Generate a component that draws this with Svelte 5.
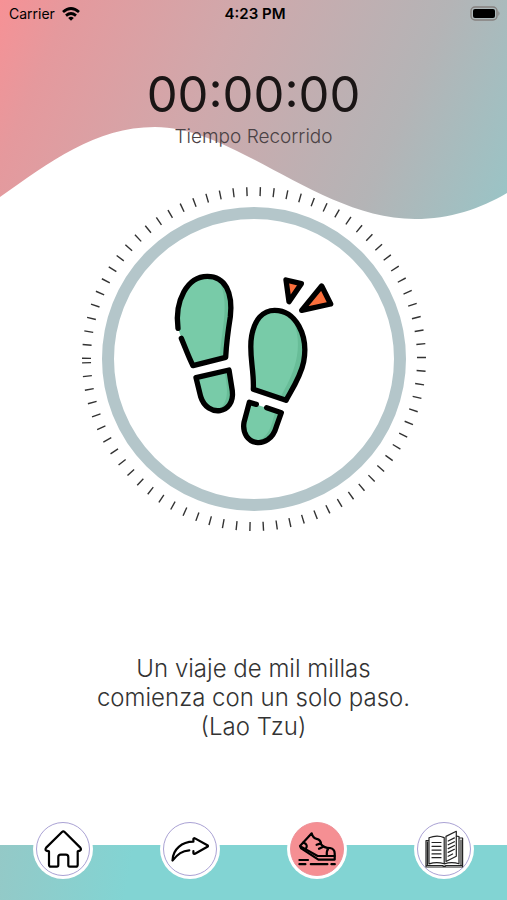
<script>
  const elapsed = '00:00:00';
  const quote = ['Un viaje de mil millas', 'comienza con un solo paso.', '(Lao Tzu)'];
  const tabs = [
    { id: 'home', label: 'Inicio' },
    { id: 'share', label: 'Compartir' },
    { id: 'walk', label: 'Caminar' },
    { id: 'book', label: 'Lectura' }
  ];
  let active = $state('walk');
</script>

<div class="screen">
  <svg class="wave" viewBox="0 0 507 220" preserveAspectRatio="none" aria-hidden="true">
    <defs>
      <linearGradient id="sky" gradientUnits="userSpaceOnUse" x1="-10" y1="20" x2="500" y2="240">
        <stop offset="0" stop-color="#f79195" />
        <stop offset="0.12" stop-color="#e5999d" />
        <stop offset="0.4" stop-color="#d0a8ab" />
        <stop offset="0.75" stop-color="#b4b4b6" />
        <stop offset="1" stop-color="#98c5c7" />
      </linearGradient>
    </defs>
    <path fill="url(#sky)" d="M0 0V197C50 162 95 127 155 127C235 127 320 219 415 219C450 219 480 209 507 193V0Z" />
  </svg>

  <header class="status">
    <span class="carrier">
      Carrier
      <svg width="18" height="14" viewBox="0 0 18 14" aria-hidden="true">
        <g fill="none" stroke="#000" stroke-width="2.8">
          <path d="M1 5Q9-1.9 17 5" />
          <path d="M4 8.6Q9 4.4 14 8.6" />
        </g>
        <path d="M6.2 10.9Q9 8.6 11.8 10.9L9 13.8Z" />
      </svg>
    </span>
    <span class="clock">4:23 PM</span>
    <svg class="battery" width="31" height="15" viewBox="0 0 31 15" aria-hidden="true">
      <rect x="1" y="1" width="26" height="13" rx="4" fill="none" stroke="#85807f" stroke-width="1.4" />
      <rect x="3" y="3" width="22" height="9" rx="2" />
      <path d="M28.4 5Q30.6 7.5 28.4 10Z" fill="#85807f" />
    </svg>
  </header>

  <main>
    <section class="timer">
      <time>{elapsed}</time>
      <p>Tiempo Recorrido</p>
    </section>

    <svg class="dial" viewBox="0 0 344 344" role="img" aria-label="Pasos">
      <path
        class="ticks"
        d="M4.5 172A167.5 167.5 0 0 1 339.5 172A167.5 167.5 0 0 1 4.5 172"
      />
      <circle cx="172" cy="172" r="146" fill="#fff" stroke="#b4c6ca" stroke-width="12" />
      <g transform="translate(78 73) scale(.33333)">
        <g fill="#78cba8">
          <path d="M55 207C44 122 82 48 142 48C194 48 218 98 211 170C203 220 199 255 197 292L99 317L64 235Z" />
          <path d="M108 353L207 330L217 393C225 459 142 470 125 410Z" />
          <path d="M280 388C283 330 265 280 275 227C284 180 308 151 344 151C405 151 446 226 431 305C423 347 398 385 378 421Z" />
          <path d="M268 427L364 458L349 500C326 570 241 551 252 487Z" />
        </g>
        <g fill="#68bd98">
          <path d="M179 67C207 94 214 123 211 170L197 292L179 295C184 210 210 131 179 67Z" />
          <path d="M194 333L207 330L217 393C220 422 204 440 181 445C211 417 200 376 194 333Z" />
          <path d="M401 184C429 216 440 256 431 305C423 347 398 385 378 421L359 415C386 368 438 282 401 184Z" />
          <path d="M347 453L364 458L349 500C340 530 319 541 300 541C335 517 334 489 347 453Z" />
        </g>
        <g fill="#fb6f3c">
          <path d="M378 60L424 71L387 125Z" />
          <path d="M485 78L512 134L425 151Z" />
        </g>
        <g fill="none" stroke="#000" stroke-width="16" stroke-linecap="round" stroke-linejoin="round">
          <path d="M54 205C43 122 82 49 142 49C196 49 219 98 211 170C203 220 199 255 197 292L99 317C85 290 76 263 64 235" />
          <path d="M108 353L207 330L217 393C225 463 142 474 122 410Z" />
          <path d="M280 388C283 330 265 280 275 227C284 180 308 151 344 151C407 151 446 226 431 305C423 347 398 385 378 421Z" />
          <path d="M289 433L268 427L252 487C241 556 328 574 349 500L364 458L320 443" />
          <path d="M378 60L424 71L387 125Z" />
          <path d="M485 78L512 132L425 151Z" />
        </g>
      </g>
    </svg>

    <section class="quote">
      <p>{#each quote as line}<span>{line}</span>{/each}</p>
    </section>
  </main>

  <nav>
    {#each tabs as tab}
      <button
        class:active={active === tab.id}
        aria-label={tab.label}
        aria-pressed={active === tab.id}
        onclick={() => (active = tab.id)}
      >
        <svg viewBox="0 0 60 60" aria-hidden="true">
          <circle class="disc" cx="30" cy="30" r="26.5" />
          {#if tab.id === 'home'}
            <path
              class="line"
              d="M29 13Q30.3 11.8 31.6 13L47.3 28.6Q48.7 30.6 47 31.6L44.7 32.4V45.7Q44.7 47.7 42.7 47.7H36.8Q35.3 47.7 35.3 46V38.2Q35.3 35.7 32.8 35.7H27.8Q25.3 35.7 25.3 38.2V46Q25.3 47.7 23.8 47.7H18Q16 47.7 16 45.7V32.4L13.3 31.6Q11.8 30.6 13.2 28.6Z"
            />
          {:else if tab.id === 'share'}
            <path
              class="line"
              d="M29.3 31.3C22 31.8 18 35 12.5 41.5C12.8 30 22 22.8 33.4 22.7V19.8Q33.8 18.8 35 19.4L47.4 26.2Q48.6 27 47.4 27.8L35 34.8Q33.6 35.2 33.4 34V32"
            />
          {:else if tab.id === 'walk'}
            <g class="line">
              <path d="M13 27L24.7 14.3C25.5 17.3 26.8 19.4 29.6 19.9C33 20.6 34 22.2 34 25.2C36.8 28.6 39.4 29 43 29Q47.7 29.8 47.7 34.5V40.6H31.4L14.2 29.4Z" />
              <path d="M14 27.6L30.6 37H47.6M16.2 23.6C20.2 24.7 20.5 27.4 18.8 30M41.4 29.2C39.5 31.5 39.6 34.5 39.8 36.8M34 24.4L29.6 25.8M36.2 27.7L32 29.8" />
              <path d="M12.4 41H21M12.4 45.2H18.4M23.8 45.2H40.4M44.4 45.2H47.8" />
            </g>
          {:else}
            <g class="fine">
              <path d="M15 21.7H12V48H48.6V19H45M13.5 23V46.4M47 21V46.4M15 44.8V18.8Q23 15.5 30.2 18.6V44.8M15 44.8Q23 42.6 30.2 44.8Q38 42.6 45 44.8V17.5L42.4 17.2M13 46.5H28.5L30.2 47.6L32 46.5H48" />
              <path d="M32 42.5V17.4L42.3 12.3V37.2L32 42.5" />
              <path d="M18 23.5H27M18 27.3H27M18 31.1H27M18 34.9H27M18 38.7H27M34.2 22L40.4 18.9M34.2 25.8L40.4 22.7M34.2 29.6L40.4 26.5M34.2 33.4L40.4 30.3M34.2 37.2L38.6 35" />
            </g>
          {/if}
        </svg>
      </button>
    {/each}
  </nav>
</div>

<style>
  :global(body) {
    margin: 0;
    background: #fff;
  }

  .screen {
    position: relative;
    display: flex;
    flex-direction: column;
    min-height: 100vh;
    font-family: Inter, 'Liberation Sans', sans-serif;
    color: #1a1515;
  }

  .wave {
    position: absolute;
    top: 0;
    left: 0;
    width: 100%;
    height: 220px;
  }

  .status {
    position: relative;
    display: grid;
    grid-template-columns: 1fr auto 1fr;
    align-items: center;
    height: 27px;
    padding: 0 6px 0 9px;
    font-size: 14px;
    color: #000;
  }

  .carrier {
    display: flex;
    align-items: center;
    gap: 7px;
  }

  .clock {
    font-size: 15px;
    font-weight: 600;
  }

  .battery {
    justify-self: end;
  }

  main {
    position: relative;
    flex: 1;
    display: flex;
    flex-direction: column;
    align-items: center;
  }

  .timer {
    display: flex;
    flex-direction: column;
    align-items: center;
    height: 127px;
    padding-top: 33px;
  }

  time {
    font-size: 49px;
    font-weight: 400;
    line-height: 70px;
  }

  p {
    margin: 0;
    font-weight: 300;
  }

  .timer p {
    font-size: 19px;
    line-height: 14px;
    color: #4b4245;
  }

  .dial {
    width: 344px;
    max-width: 100%;
  }

  .ticks {
    fill: none;
    stroke: #333;
    stroke-width: 9;
    stroke-dasharray: 1.4 12.03;
  }

  .quote {
    flex: 1;
    display: flex;
    align-items: center;
    padding: 18px 16px 0;
    text-align: center;
  }

  .quote p {
    font-size: 24px;
    line-height: 29px;
    color: #333;
  }

  .quote span {
    display: block;
  }

  nav {
    position: relative;
    display: grid;
    grid-template-columns: repeat(4, 1fr);
    justify-items: center;
    height: 55px;
    background: linear-gradient(100deg, #94c9c7 0, #82d4d3 26%);
  }

  button {
    width: 60px;
    height: 60px;
    margin-top: -26px;
    padding: 0;
    border: 0;
    border-radius: 50%;
    background: #fff;
    cursor: pointer;
  }

  button svg {
    display: block;
  }

  .disc {
    fill: #fff;
    stroke: #aaa2d4;
    stroke-width: 1;
  }

  .active .disc {
    fill: #f58f93;
    stroke: #ee9299;
  }

  .line,
  .fine {
    fill: none;
    stroke: #000;
    stroke-width: 2.2;
    stroke-linecap: round;
    stroke-linejoin: round;
  }

  .fine {
    stroke: #222;
    stroke-width: 1.2;
  }
</style>
